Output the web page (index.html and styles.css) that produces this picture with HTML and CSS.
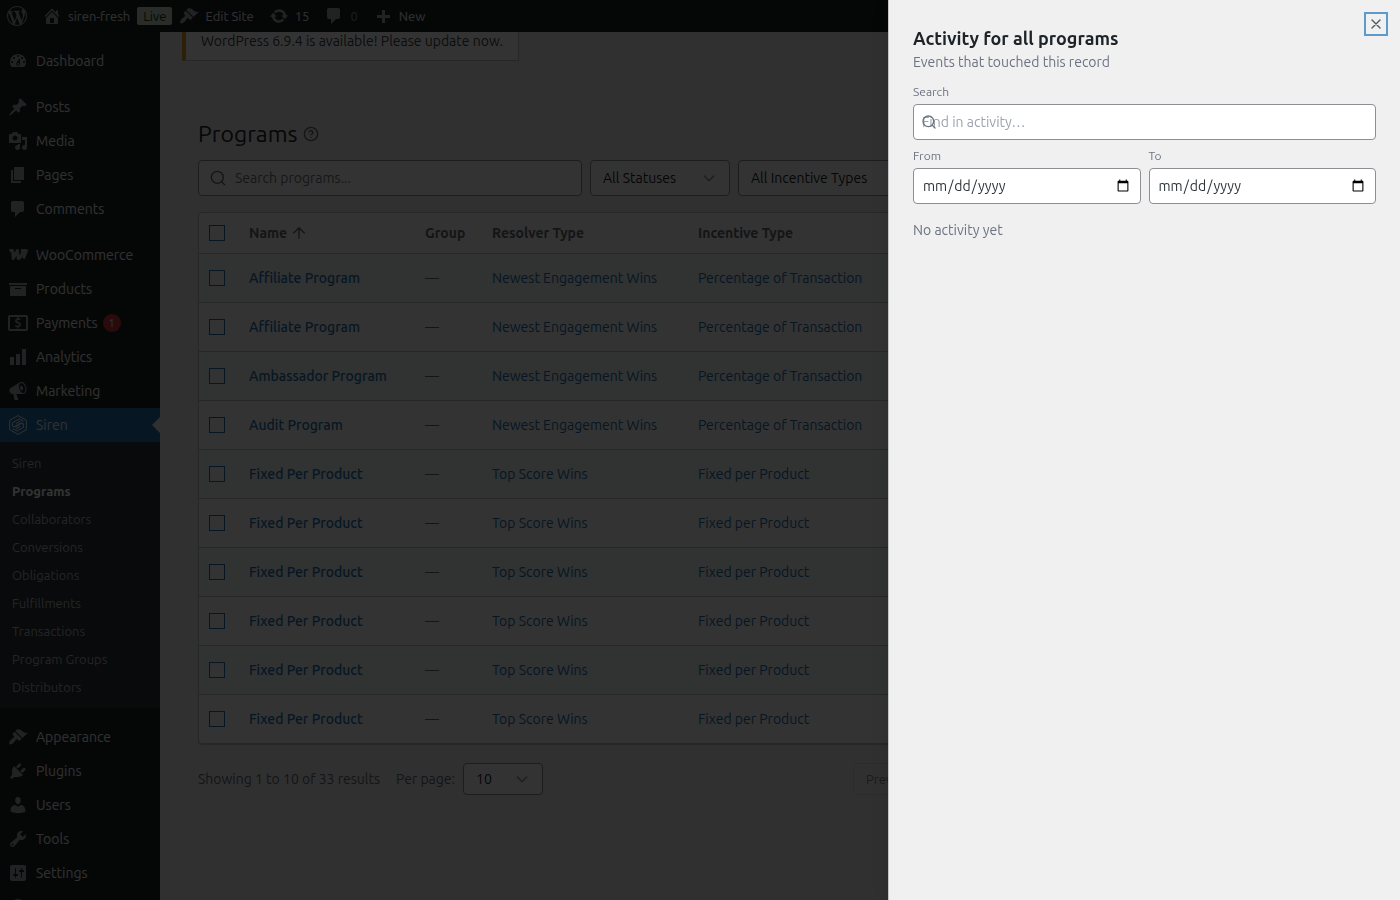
FILE: index.html
```html
<!DOCTYPE html>
<html lang="en">
<head>
  <meta charset="UTF-8">
  <meta name="viewport" content="width=device-width, initial-scale=1.0">
  <title>Programs - Siren</title>
  <link rel="stylesheet" href="styles.css">
</head>
<body>
  <header class="adminbar">
    <a href="#"><svg class="icon" viewBox="0 0 20 20"><path d="M20 10c0-5.51-4.49-10-10-10C4.48 0 0 4.49 0 10c0 5.52 4.48 10 10 10 5.51 0 10-4.48 10-10zM7.78 15.37L4.37 6.22c.55-.02 1.17-.08 1.17-.08.5-.06.44-1.13-.06-1.11 0 0-1.45.11-2.37.11-.18 0-.37 0-.58-.01C4.12 2.69 6.87 1.11 10 1.11c2.33 0 4.45.87 6.05 2.34-.68-.11-1.65.39-1.65 1.58 0 .74.45 1.36.9 2.1.35.61.55 1.36.55 2.46 0 1.49-1.4 5-1.4 5l-3.03-8.37c.54-.02.82-.17.82-.17.5-.05.44-1.25-.06-1.22 0 0-1.44.12-2.38.12-.87 0-2.33-.12-2.33-.12-.5-.03-.56 1.2-.06 1.22l.92.08 1.26 3.41zM17.41 10c.24-.64.74-1.87.43-4.25.7 1.29 1.05 2.71 1.05 4.25 0 3.29-1.73 6.24-4.4 7.78.97-2.59 1.94-5.2 2.92-7.78zM6.1 18.09C3.12 16.65 1.11 13.53 1.11 10c0-1.3.23-2.48.72-3.59C3.25 10.3 4.67 14.2 6.1 18.09zm4.03-6.63l2.58 6.98c-.86.29-1.76.45-2.71.45-.79 0-1.57-.11-2.29-.33.81-2.38 1.62-4.74 2.42-7.1z"/></svg></a>
    <div class="site">
      <a href="#"><svg class="icon" viewBox="0 0 20 20"><path d="M16 8.5l1.53 1.53-1.06 1.06L10 4.6l-6.47 6.49-1.06-1.06L10 2.5l4 4v-2h2v4zm-6-2.46l6 5.99V18H4v-5.97zM12 17v-5H8v5h4z"/></svg>siren-fresh</a>
      <span class="live">Live</span>
      <a href="#"><svg class="icon" viewBox="0 0 20 20"><path d="M14.48 11.06L7.41 3.99l1.5-1.5c.5-.56 2.3-.47 3.51.32 1.21.8 1.43 1.28 2.91 2.1 1.18.64 2.45 1.26 4.45.85zm-.71.71L6.7 4.7 4.93 6.47c-.39.39-.39 1.02 0 1.41l1.06 1.06c.39.39.39 1.03 0 1.42-.6.6-1.43 1.11-2.21 1.69-.35.26-.7.53-1.01.84C1.43 14.23.4 16.08 1.4 17.07c.99 1 2.84-.03 4.18-1.36.31-.31.58-.66.85-1.02.57-.78 1.08-1.61 1.69-2.21.39-.39 1.02-.39 1.41 0l1.06 1.06c.39.39 1.02.39 1.41 0z"/></svg>Edit Site</a>
    </div>
    <a href="#"><svg class="icon" viewBox="0 0 20 20"><path d="M10.2 3.28c3.53 0 6.43 2.61 6.92 6h2.08l-3.5 4-3.5-4h2.32c-.45-1.97-2.21-3.45-4.32-3.45-1.45 0-2.73.71-3.54 1.78L4.95 5.66C6.23 4.2 8.11 3.28 10.2 3.28zm-.4 13.44c-3.52 0-6.43-2.61-6.92-6H.8l3.5-4c1.17 1.33 2.33 2.67 3.5 4H5.48c.45 1.97 2.21 3.45 4.32 3.45 1.45 0 2.73-.71 3.54-1.78l1.71 1.95c-1.28 1.46-3.15 2.38-5.25 2.38z"/></svg>15</a>
    <a href="#" class="muted"><svg class="icon" viewBox="0 0 20 20"><path d="M5 2h9c1.1 0 2 .9 2 2v7c0 1.1-.9 2-2 2h-2l-5 5v-5H5c-1.1 0-2-.9-2-2V4c0-1.1.9-2 2-2z"/></svg>0</a>
    <a href="#"><svg class="icon" viewBox="0 0 20 20"><path d="M17 9v3h-5v5H9v-5H4V9h5V4h3v5z"/></svg>New</a>
  </header>

  <div class="layout">
    <nav class="sidebar">
      <ul class="menu">
        <li><a href="#"><svg class="icon" viewBox="0 0 20 20"><path d="M3.76 16h12.48c1.1-1.37 1.76-3.11 1.76-5 0-4.42-3.58-8-8-8s-8 3.58-8 8c0 1.89.66 3.63 1.76 5zM10 4c.55 0 1 .45 1 1s-.45 1-1 1-1-.45-1-1 .45-1 1-1zM6 6c.55 0 1 .45 1 1s-.45 1-1 1-1-.45-1-1 .45-1 1-1zm8 0c.55 0 1 .45 1 1s-.45 1-1 1-1-.45-1-1 .45-1 1-1zm-5.37 5.55L12 7v6c0 1.1-.9 2-2 2s-2-.9-2-2c0-.57.24-1.08.63-1.45zM4 10c.55 0 1 .45 1 1s-.45 1-1 1-1-.45-1-1 .45-1 1-1zm12 0c.55 0 1 .45 1 1s-.45 1-1 1-1-.45-1-1 .45-1 1-1zm-5 3c0-.55-.45-1-1-1s-1 .45-1 1 .45 1 1 1 1-.45 1-1z"/></svg>Dashboard</a></li>
      </ul>
      <ul class="menu">
        <li><a href="#"><svg class="icon" viewBox="0 0 20 20"><path d="M10.44 3.02l1.82-1.82 6.36 6.35-1.83 1.82c-1.05-.68-2.48-.57-3.41.36l-.75.75c-.92.93-1.04 2.35-.35 3.41l-1.83 1.82-2.41-2.41-2.8 2.79c-.42.42-3.38 2.71-3.8 2.29s1.86-3.39 2.28-3.81l2.79-2.79L4.1 9.36l1.83-1.82c1.05.69 2.48.57 3.4-.36l.75-.75c.93-.92 1.05-2.35.36-3.41z"/></svg>Posts</a></li>
        <li><a href="#"><svg class="icon" viewBox="0 0 20 20"><path d="M13 11V4c0-.55-.45-1-1-1h-1.67L9 1H5L3.67 3H2c-.55 0-1 .45-1 1v7c0 .55.45 1 1 1h10c.55 0 1-.45 1-1zM7 4.5c1.38 0 2.5 1.12 2.5 2.5S8.38 9.5 7 9.5 4.5 8.38 4.5 7 5.62 4.5 7 4.5zM14 6h5v10.5c0 1.38-1.12 2.5-2.5 2.5S14 17.88 14 16.5s1.12-2.5 2.5-2.5c.17 0 .34.02.5.05V9h-3V6zm-4 8.05V13h2v3.5c0 1.38-1.12 2.5-2.5 2.5S7 17.88 7 16.5 8.12 14 9.5 14c.17 0 .34.02.5.05z"/></svg>Media</a></li>
        <li><a href="#"><svg class="icon" viewBox="0 0 20 20"><path d="M6 15V2h10v13H6zm-1 1h8v2H3V5h2v11z"/></svg>Pages</a></li>
        <li><a href="#"><svg class="icon" viewBox="0 0 20 20"><path d="M5 2h9c1.1 0 2 .9 2 2v7c0 1.1-.9 2-2 2h-2l-5 5v-5H5c-1.1 0-2-.9-2-2V4c0-1.1.9-2 2-2z"/></svg>Comments</a></li>
      </ul>
      <ul class="menu">
        <li><a href="#"><svg class="icon line" viewBox="0 0 20 20"><path d="M1.500 5.500h3L5.200 13.500l4.200-8 .9 8c2 0 3.400-3.200 5-8M12.900 5.500h5.600l-3 8" stroke-width="3" stroke-linejoin="round"/></svg>WooCommerce</a></li>
        <li><a href="#"><svg class="icon" viewBox="0 0 20 20"><path d="M19 4v2H1V4h18zM2 7h16v10H2V7zm11 3V9H7v1h6z"/></svg>Products</a></li>
        <li><a href="#"><svg class="icon" viewBox="0 0 20 20"><rect x="1" y="3" width="18" height="14" rx="1" fill="none" stroke="currentColor" stroke-width="2"/><text x="10" y="14" text-anchor="middle" font-size="12" font-weight="700">$</text></svg>Payments<span class="count">1</span></a></li>
        <li><a href="#"><svg class="icon" viewBox="0 0 20 20"><path d="M18 18V2h-4v16h4zm-6 0V7H8v11h4zm-6 0v-8H2v8h4z"/></svg>Analytics</a></li>
        <li><a href="#"><svg class="icon" viewBox="0 0 20 20"><path d="M18.15 5.94c.46 1.62.38 3.22-.02 4.48-.42 1.28-1.26 2.18-2.3 2.48-.16.06-.26.06-.4.06-.06.02-.12.02-.18.02-.06.02-.14.02-.22.02h-6.8l2.22 5.5c.02.14-.06.26-.14.34-.08.1-.24.16-.34.16H6.95c-.1 0-.26-.06-.34-.16-.08-.08-.16-.2-.14-.34l-1-5.5H4.25l-.02-.02c-.5.06-1.08-.18-1.54-.62s-.88-1.08-1.06-1.88c-.24-.8-.2-1.56-.02-2.2.18-.62.58-1.08 1.06-1.3l.02-.02 9-5.4c.1-.06.18-.1.24-.16.06-.04.14-.08.24-.12.16-.08.28-.12.5-.18 1.04-.3 2.24.1 3.22.98s1.84 2.24 2.26 3.86zm-2.58 5.98h-.02c.4-.1.74-.34 1.04-.7.58-.7.86-1.76.86-3.04 0-.64-.1-1.3-.28-1.98-.34-1.36-1.02-2.5-1.78-3.24s-1.68-1.1-2.46-.88c-.82.22-1.4.96-1.7 2-.32 1.04-.28 2.36.06 3.72.38 1.36 1 2.5 1.8 3.24.78.74 1.62 1.1 2.48.88zm-2.54-7.08c.22-.04.42-.02.62.04.38.16.76.48 1.02 1s.42 1.2.42 1.78c0 .3-.04.56-.12.8-.18.48-.44.84-.86.94-.34.1-.8-.06-1.14-.4s-.64-.86-.78-1.5c-.18-.62-.12-1.24.02-1.72s.48-.84.82-.94z"/></svg>Marketing</a></li>
        <li>
          <a href="#" class="active"><svg class="icon line" viewBox="0 0 20 20"><path d="M10 .6l8.3 4.7v9.4L10 19.4l-8.3-4.7V5.3z"/><path d="M15.5 6.3L11 4 4.5 7.8v3.4l3 .8 6.5-3.8M4.5 13.7L9 16l6.5-3.8V8.8l-3-.8L6 11.8M8 8.5l4-2.3M8 13.8l4-2.3"/></svg>Siren</a>
          <ul class="submenu">
            <li><a href="#">Siren</a></li>
            <li><a href="#" class="current">Programs</a></li>
            <li><a href="#">Collaborators</a></li>
            <li><a href="#">Conversions</a></li>
            <li><a href="#">Obligations</a></li>
            <li><a href="#">Fulfillments</a></li>
            <li><a href="#">Transactions</a></li>
            <li><a href="#">Program Groups</a></li>
            <li><a href="#">Distributors</a></li>
          </ul>
        </li>
      </ul>
      <ul class="menu">
        <li><a href="#"><svg class="icon" viewBox="0 0 20 20"><path d="M14.48 11.06L7.41 3.99l1.5-1.5c.5-.56 2.3-.47 3.51.32 1.21.8 1.43 1.28 2.91 2.1 1.18.64 2.45 1.26 4.45.85zm-.71.71L6.7 4.7 4.93 6.47c-.39.39-.39 1.02 0 1.41l1.06 1.06c.39.39.39 1.03 0 1.42-.6.6-1.43 1.11-2.21 1.69-.35.26-.7.53-1.01.84C1.43 14.23.4 16.08 1.4 17.07c.99 1 2.84-.03 4.18-1.36.31-.31.58-.66.85-1.02.57-.78 1.08-1.61 1.69-2.21.39-.39 1.02-.39 1.41 0l1.06 1.06c.39.39 1.02.39 1.41 0z"/></svg>Appearance</a></li>
        <li><a href="#"><svg class="icon" viewBox="0 0 20 20"><path d="M13.11 4.36L9.87 7.6 8 5.73l3.24-3.24c.35-.34 1.05-.2 1.56.32.52.51.66 1.21.31 1.55zm-8 1.77l.91-1.12 9.01 9.01-1.19.84c-.71.71-2.63 1.16-3.82 1.16H6.14L4.9 17.26c-.59.59-1.54.59-2.12 0-.59-.58-.59-1.53 0-2.12l1.24-1.24v-3.88c0-1.13.4-3.19 1.09-3.89zm7.26 3.97l3.24-3.24c.34-.35 1.04-.21 1.55.31.52.51.66 1.21.31 1.55l-3.24 3.25z"/></svg>Plugins</a></li>
        <li><a href="#"><svg class="icon" viewBox="0 0 20 20"><path d="M10 9.25c-2.27 0-2.73-3.44-2.73-3.44C7 4.02 7.82 2 9.97 2c2.16 0 2.98 2.02 2.71 3.81 0 0-.41 3.44-2.68 3.44zm0 2.57L12.72 10c2.39 0 4.52 2.33 4.52 4.53v2.49s-3.65 1.13-7.24 1.13c-3.65 0-7.24-1.13-7.24-1.13v-2.49c0-2.25 1.94-4.48 4.47-4.48z"/></svg>Users</a></li>
        <li><a href="#"><svg class="icon" viewBox="0 0 20 20"><path d="M16.68 9.77c-1.34 1.34-3.3 1.67-4.95.99l-5.41 6.52c-.99.99-2.59.99-3.58 0s-.99-2.59 0-3.57l6.52-5.42c-.68-1.65-.35-3.61.99-4.95 1.28-1.28 3.12-1.62 4.72-1.06l-2.89 2.89 2.82 2.82 2.86-2.87c.53 1.58.18 3.39-1.08 4.65zM3.81 16.21c.4.39 1.04.39 1.43 0 .4-.4.4-1.04 0-1.43-.39-.4-1.03-.4-1.43 0-.39.39-.39 1.03 0 1.43z"/></svg>Tools</a></li>
        <li><a href="#"><svg class="icon" viewBox="0 0 20 20"><path d="M18 16V4c0-1.1-.9-2-2-2H4c-1.1 0-2 .9-2 2v12c0 1.1.9 2 2 2h12c1.1 0 2-.9 2-2zM8 11h1c.55 0 1 .45 1 1s-.45 1-1 1H8v1.5c0 .28-.22.5-.5.5s-.5-.22-.5-.5V13H6c-.55 0-1-.45-1-1s.45-1 1-1h1V5.5c0-.28.22-.5.5-.5s.5.22.5.5V11zm5-2h-1c-.55 0-1-.45-1-1s.45-1 1-1h1V5.5c0-.28.22-.5.5-.5s.5.22.5.5V7h1c.55 0 1 .45 1 1s-.45 1-1 1h-1v5.5c0 .28-.22.5-.5.5s-.5-.22-.5-.5V9z"/></svg>Settings</a></li>
        <li><a href="#" aria-label="Collapse menu"><svg class="icon" viewBox="0 0 20 20"><path d="M10 2a8 8 0 1 0 0 16 8 8 0 0 0 0-16zm2 12l-6-4 6-4z"/></svg></a></li>
      </ul>
    </nav>

    <main class="content">
      <div class="notice">WordPress 6.9.4 is available! Please update now.</div>

      <div class="page">
        <div class="page-head">
          <h1>Programs</h1>
          <svg class="line-icon" viewBox="0 0 24 24"><circle cx="12" cy="12" r="10"/><path d="M9.1 9a3 3 0 0 1 5.8 1c0 2-3 3-3 3M12 17h.01"/></svg>
        </div>

        <div class="filters">
          <div class="search">
            <svg class="line-icon" viewBox="0 0 24 24"><circle cx="11" cy="11" r="9"/><path d="M22 22l-4.500-4.500"/></svg>
            <input type="text" placeholder="Search programs..." aria-label="Search programs">
          </div>
          <div class="select status">
            <select aria-label="Status"><option>All Statuses</option></select>
            <svg class="line-icon" viewBox="0 0 24 24"><path d="M5 9l7 7 7-7"/></svg>
          </div>
          <div class="select incentive">
            <select aria-label="Incentive type"><option>All Incentive Types</option></select>
            <svg class="line-icon" viewBox="0 0 24 24"><path d="M5 9l7 7 7-7"/></svg>
          </div>
        </div>

        <div class="table-wrap">
          <table>
            <colgroup>
              <col class="col-check">
              <col class="col-name">
              <col class="col-group">
              <col class="col-resolver">
              <col>
            </colgroup>
            <thead>
              <tr>
                <th><input type="checkbox" aria-label="Select all"></th>
                <th>Name <svg class="line-icon" viewBox="0 0 24 24"><path d="M12 20V4M4 12l8-8 8 8"/></svg></th>
                <th>Group</th>
                <th>Resolver Type</th>
                <th>Incentive Type</th>
              </tr>
            </thead>
            <tbody>
              <tr><td><input type="checkbox" aria-label="Select row"></td><td><a href="#" class="name">Affiliate Program</a></td><td>—</td><td><a href="#">Newest Engagement Wins</a></td><td><a href="#">Percentage of Transaction</a></td></tr>
              <tr><td><input type="checkbox" aria-label="Select row"></td><td><a href="#" class="name">Affiliate Program</a></td><td>—</td><td><a href="#">Newest Engagement Wins</a></td><td><a href="#">Percentage of Transaction</a></td></tr>
              <tr><td><input type="checkbox" aria-label="Select row"></td><td><a href="#" class="name">Ambassador Program</a></td><td>—</td><td><a href="#">Newest Engagement Wins</a></td><td><a href="#">Percentage of Transaction</a></td></tr>
              <tr><td><input type="checkbox" aria-label="Select row"></td><td><a href="#" class="name">Audit Program</a></td><td>—</td><td><a href="#">Newest Engagement Wins</a></td><td><a href="#">Percentage of Transaction</a></td></tr>
              <tr><td><input type="checkbox" aria-label="Select row"></td><td><a href="#" class="name">Fixed Per Product</a></td><td>—</td><td><a href="#">Top Score Wins</a></td><td><a href="#">Fixed per Product</a></td></tr>
              <tr><td><input type="checkbox" aria-label="Select row"></td><td><a href="#" class="name">Fixed Per Product</a></td><td>—</td><td><a href="#">Top Score Wins</a></td><td><a href="#">Fixed per Product</a></td></tr>
              <tr><td><input type="checkbox" aria-label="Select row"></td><td><a href="#" class="name">Fixed Per Product</a></td><td>—</td><td><a href="#">Top Score Wins</a></td><td><a href="#">Fixed per Product</a></td></tr>
              <tr><td><input type="checkbox" aria-label="Select row"></td><td><a href="#" class="name">Fixed Per Product</a></td><td>—</td><td><a href="#">Top Score Wins</a></td><td><a href="#">Fixed per Product</a></td></tr>
              <tr><td><input type="checkbox" aria-label="Select row"></td><td><a href="#" class="name">Fixed Per Product</a></td><td>—</td><td><a href="#">Top Score Wins</a></td><td><a href="#">Fixed per Product</a></td></tr>
              <tr><td><input type="checkbox" aria-label="Select row"></td><td><a href="#" class="name">Fixed Per Product</a></td><td>—</td><td><a href="#">Top Score Wins</a></td><td><a href="#">Fixed per Product</a></td></tr>
            </tbody>
          </table>
        </div>

        <div class="table-foot">
          <span>Showing 1 to 10 of 33 results</span>
          <label for="per-page">Per page:</label>
          <div class="select per-page">
            <select id="per-page"><option>10</option></select>
            <svg class="line-icon" viewBox="0 0 24 24"><path d="M5 9l7 7 7-7"/></svg>
          </div>
          <div class="pager">
            <button type="button" disabled>Previous</button>
          </div>
        </div>
      </div>
    </main>
  </div>

  <div class="backdrop"></div>

  <aside class="drawer" role="dialog" aria-labelledby="drawer-title">
    <button type="button" class="close" aria-label="Close"><svg class="line-icon" viewBox="0 0 24 24"><path d="M6 6l12 12M18 6L6 18"/></svg></button>
    <h2 id="drawer-title">Activity for all programs</h2>
    <p class="subtitle">Events that touched this record</p>

    <div class="field">
      <label for="activity-search">Search</label>
      <div class="activity-search">
        <input type="text" id="activity-search" placeholder="Find in activity…">
        <svg class="line-icon" viewBox="0 0 24 24"><circle cx="11" cy="11" r="8"/><path d="M21 21l-4.300-4.300"/></svg>
      </div>
    </div>

    <div class="dates">
      <div class="field">
        <label for="from">From</label>
        <input type="date" id="from">
      </div>
      <div class="field">
        <label for="to">To</label>
        <input type="date" id="to">
      </div>
    </div>

    <p class="empty">No activity yet</p>
  </aside>
</body>
</html>
```
FILE: styles.css
```css
* {
  box-sizing: border-box;
}

body {
  margin: 0;
  height: 100vh;
  overflow: hidden;
  font-family: Ubuntu, "Noto Sans", sans-serif;
  font-size: 14px;
  line-height: 20px;
  color: #3c434a;
  background-color: #f0f0f1;
}

a {
  color: #2271b1;
  text-decoration: none;
}

input,
select,
button {
  font-family: inherit;
  font-size: 14px;
}

.icon {
  width: 20px;
  height: 20px;
  flex: none;
  fill: currentColor;
  color: #a7aaad;
}

.icon.line {
  fill: none;
  stroke: currentColor;
}

.line-icon {
  width: 16px;
  height: 16px;
  flex: none;
  fill: none;
  stroke: #646970;
  stroke-width: 2;
  stroke-linecap: round;
  stroke-linejoin: round;
}

/* Top bar */
.adminbar {
  position: fixed;
  top: 0;
  left: 0;
  right: 0;
  z-index: 10;
  display: flex;
  align-items: center;
  gap: 15px;
  height: 32px;
  padding: 0 7px;
  font-size: 13px;
  background-color: #1d2327;
}

.adminbar a {
  display: flex;
  align-items: center;
  gap: 6px;
  color: #f0f0f1;
}

.adminbar a.muted {
  color: #8c8f94;
}

.site {
  display: flex;
  align-items: center;
  gap: 7px;
}

.live {
  padding: 0 6px;
  line-height: 18px;
  color: #00450c;
  background-color: #d0dcd0;
  border-radius: 2px;
}

/* Side menu */
.layout {
  display: flex;
  align-items: stretch;
  min-height: 100vh;
}

.sidebar {
  width: 160px;
  flex: none;
  padding-top: 44px;
  background-color: #1d2327;
}

.menu,
.submenu {
  list-style: none;
  margin: 0;
  padding: 0;
}

.menu {
  margin-bottom: 12px;
}

.menu a {
  display: flex;
  align-items: center;
  gap: 8px;
  height: 34px;
  padding-left: 8px;
  color: #f0f0f1;
}

.menu a.active {
  position: relative;
  background-color: #2271b1;
}

.menu a.active .icon {
  color: #f0f0f1;
}

.menu a.active::after {
  content: "";
  position: absolute;
  right: 0;
  top: 9px;
  border: 8px solid transparent;
  border-left-width: 0;
  border-right-color: #f0f0f1;
}

.count {
  width: 18px;
  margin-left: -3px;
  font-size: 11px;
  line-height: 18px;
  text-align: center;
  background-color: #d63638;
  border-radius: 9px;
}

.submenu {
  padding: 7px 0;
  background-color: #2c3338;
}

.submenu a {
  height: 28px;
  padding-left: 12px;
  font-size: 13px;
  color: #b4b7ba;
}

.submenu a.current {
  font-weight: 600;
  color: #fff;
}

/* Page */
.content {
  flex: 1;
  min-width: 0;
  padding: 22px 18px 0 22px;
}

.notice {
  width: fit-content;
  padding: 8px 15px;
  line-height: 21px;
  background-color: #fff;
  border: 1px solid #c3c4c7;
  border-left: 4px solid #dba617;
}

.page {
  padding: 57px 0 0 16px;
}

.page-head {
  display: flex;
  align-items: center;
  gap: 6px;
  margin-bottom: 10px;
}

h1 {
  margin: 0;
  font-size: 23px;
  font-weight: 400;
  line-height: 32px;
  color: #1d2327;
}

.filters {
  display: flex;
  gap: 8px;
  margin-bottom: 16px;
}

.search {
  display: flex;
  align-items: center;
  gap: 9px;
  width: 384px;
  height: 36px;
  padding: 0 11px;
  background-color: #fff;
  border: 1px solid #8c8f94;
  border-radius: 4px;
}

.search input {
  flex: 1;
  padding: 0;
  border: 0;
  outline: 0;
  background: none;
}

.search input::placeholder {
  color: #757575;
}

.select {
  display: grid;
  align-items: center;
  height: 36px;
}

.select select,
.select svg {
  grid-area: 1 / 1;
}

.select select {
  appearance: none;
  width: 100%;
  height: 100%;
  padding: 0 12px;
  color: #1d2327;
  background-color: #fff;
  border: 1px solid #8c8f94;
  border-radius: 4px;
}

.select svg {
  justify-self: end;
  margin-right: 13px;
  stroke: #8c8f94;
  pointer-events: none;
}

.status {
  width: 140px;
}

.incentive {
  width: 200px;
}

.table-wrap {
  background-color: #fff;
  border: 1px solid #c3c4c7;
  border-radius: 4px;
  box-shadow: 0 1px 1px rgba(0, 0, 0, 0.2);
  overflow: hidden;
}

table {
  width: 100%;
  table-layout: fixed;
  border-collapse: separate;
  border-spacing: 0;
}

.col-check {
  width: 40px;
}

.col-name {
  width: 176px;
}

.col-group {
  width: 67px;
}

.col-resolver {
  width: 206px;
}

th,
td {
  padding: 0 10px;
  text-align: left;
  white-space: nowrap;
  color: #646970;
}

th {
  height: 41px;
  font-weight: 600;
  border-bottom: 1px solid #c3c4c7;
}

th svg {
  vertical-align: -3px;
}

td {
  height: 49px;
  border-bottom: 1px solid #c3c4c7;
}

tbody tr:nth-child(odd) {
  background-color: #f3f9f8;
}

tbody tr:last-child td {
  height: 48px;
  border-bottom: 0;
}

.name {
  font-weight: 500;
}

table input {
  appearance: none;
  display: block;
  width: 16px;
  height: 16px;
  margin: 0;
  background-color: #fff;
  border: 1px solid #2271b1;
}

.table-foot {
  display: flex;
  align-items: center;
  margin-top: 19px;
  color: #646970;
}

.table-foot label {
  margin: 0 8px 0 16px;
}

.per-page {
  width: 80px;
  height: 32px;
}

.pager {
  width: 529px;
  margin-left: auto;
}

.pager button {
  height: 32px;
  padding: 0 12px;
  font-size: 13px;
  color: #1d2327;
  background-color: #f0f0f1;
  border: 1px solid #c3c4c7;
  border-radius: 4px;
  opacity: 0.5;
}

/* Activity drawer */
.backdrop {
  position: fixed;
  inset: 0;
  z-index: 20;
  background-color: rgba(0, 0, 0, 0.8);
}

.drawer {
  position: fixed;
  top: 0;
  right: 0;
  bottom: 0;
  z-index: 30;
  width: 512px;
  padding: 26px 24px;
  color: #6b7280;
  background-color: #f0f0f1;
  border-left: 1px solid #c3c4c7;
  box-shadow: 0 0 16px rgba(0, 0, 0, 0.1);
}

.drawer h2 {
  margin: 0;
  font-size: 18px;
  font-weight: 600;
  line-height: 24px;
  color: #1d2327;
}

.drawer p {
  margin: 0;
}

.close {
  position: absolute;
  top: 12px;
  right: 12px;
  display: flex;
  align-items: center;
  justify-content: center;
  width: 24px;
  height: 24px;
  padding: 0;
  background: none;
  border: 2px solid #5b9bcb;
}

.close svg {
  stroke: #50575e;
}

.drawer .subtitle {
  margin: 2px 0 12px;
}

.field {
  flex: 1;
  display: flex;
  flex-direction: column;
  gap: 4px;
}

.field label {
  font-size: 12px;
  line-height: 16px;
}

.field input {
  width: 100%;
  height: 36px;
  padding: 0 8px;
  color: #2c3338;
  background-color: #fff;
  border: 1px solid #8c8f94;
  border-radius: 4px;
}

.field input::placeholder {
  color: #9ca3af;
}

.activity-search {
  position: relative;
}

.activity-search svg {
  position: absolute;
  left: 8px;
  top: 10px;
  stroke: #6b7280;
}

.dates {
  display: flex;
  gap: 8px;
  margin-top: 8px;
}

.drawer .empty {
  margin-top: 16px;
}
```
